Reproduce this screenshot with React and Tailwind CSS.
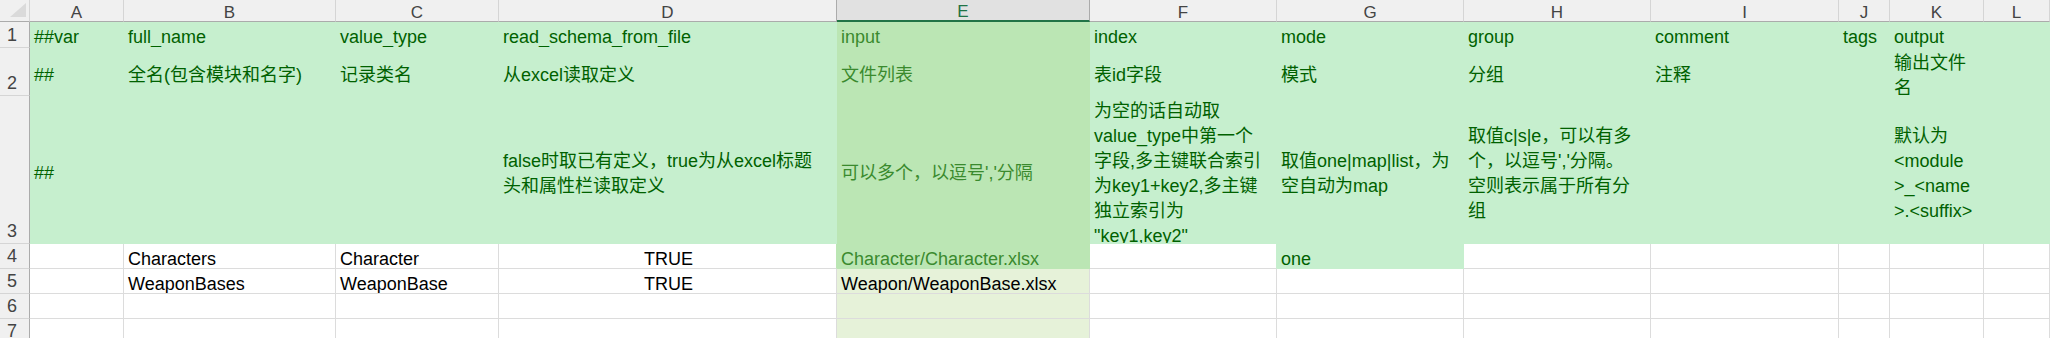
import React from "react";

const COLS = ["A", "B", "C", "D", "E", "F", "G", "H", "I", "J", "K", "L"];

// cell types: g = green fill, eg = green fill in selected column, el = light selection, w = white
const BG = {
  g: "bg-[#C6EFCE]",
  eg: "bg-[#BBE6B4]",
  el: "bg-[#E6F2D9]",
  w: "bg-white",
};
const BR = {
  g: "border-r-[#C6EFCE]",
  eg: "border-r-[#BBE6B4]",
  grid: "border-r-[#DCDCDC]",
};
const BB = {
  g: "border-b-[#C6EFCE]",
  eg: "border-b-[#BBE6B4]",
  grid: "border-b-[#DCDCDC]",
};

function typeOf(r, c) {
  if (r <= 3) return c === 4 ? "eg" : "g";
  if (r === 4) {
    if (c === 4) return "eg";
    if (c === 6) return "g";
    return "w";
  }
  return c === 4 ? "el" : "w";
}

const isGreen = (t) => t === "g" || t === "eg";

const DATA = {
  1: ["##var", "full_name", "value_type", "read_schema_from_file", "input", "index", "mode", "group", "comment", "tags", "output", ""],
  2: ["##", "全名(包含模块和名字)", "记录类名", "从excel读取定义", "文件列表", "表id字段", "模式", "分组", "注释", "", ["输出文件", "名"], ""],
  3: [
    "##",
    "",
    "",
    ["false时取已有定义，true为从excel标题", "头和属性栏读取定义"],
    "可以多个，以逗号','分隔",
    ["为空的话自动取", "value_type中第一个", "字段,多主键联合索引", "为key1+key2,多主键", "独立索引为", "\"key1,key2\""],
    ["取值one|map|list，为", "空自动为map"],
    ["取值c|s|e，可以有多", "个，以逗号','分隔。", "空则表示属于所有分", "组"],
    "",
    "",
    ["默认为", "<module", ">_<name", ">.<suffix>"],
    "",
  ],
  4: ["", "Characters", "Character", "TRUE", "Character/Character.xlsx", "", "one", "", "", "", "", ""],
  5: ["", "WeaponBases", "WeaponBase", "TRUE", "Weapon/WeaponBase.xlsx", "", "", "", "", "", "", ""],
  6: Array(12).fill(""),
  7: Array(12).fill(""),
};

function Corner() {
  return (
    <div className="bg-[#F0F0F0] border-r border-b border-r-[#D5D5D5] border-b-[#ABABAB] relative">
      <svg width="29" height="21" className="absolute left-0 top-0">
        <polygon points="10,17 26,17 26,3" fill="#DADADA" />
      </svg>
    </div>
  );
}

function ColHeader({ k }) {
  if (k === "E") {
    return (
      <div className="bg-[#E1E1E1] border-r border-r-[#ABABAB] border-b-2 border-b-[#217346] flex items-center justify-center text-[#217346] text-[17px] leading-[19px] pt-[2px]">
        {k}
      </div>
    );
  }
  const rightBorder = k === "D" ? "border-r-[#ABABAB]" : "border-r-[#D5D5D5]";
  return (
    <div className={`bg-[#F0F0F0] border-r border-b ${rightBorder} border-b-[#ABABAB] flex items-center justify-center text-[#444444] text-[17px] leading-[21px] pt-[3px]`}>
      {k}
    </div>
  );
}

function RowHeader({ n }) {
  return (
    <div className="bg-[#F0F0F0] border-r border-b border-r-[#ABABAB] border-b-[#D5D5D5] flex items-end justify-center pr-[5px] pb-[1px] text-[#444444] text-[18px] leading-[22px]">
      {n}
    </div>
  );
}

function Cell({ r, c }) {
  const t = typeOf(r, c);
  const right = c < 11 ? typeOf(r, c + 1) : "w";
  const below = r < 7 ? typeOf(r + 1, c) : "w";
  const brKey = isGreen(t) ? t : isGreen(right) ? right : "grid";
  const bbKey = isGreen(t) ? t : isGreen(below) ? below : "grid";
  const v = DATA[r][c];
  const lines = Array.isArray(v) ? v : v ? [v] : [];
  let color = "text-black";
  if (isGreen(t)) color = c === 4 ? "text-[#3A8A2E]" : "text-[#006100]";
  const center = r >= 4 && c === 3;
  const pad = r === 1 ? "pt-[5px]" : r >= 4 ? "pt-[6px]" : "pt-[8px]";
  return (
    <div
      className={`${BG[t]} border-r border-b ${BR[brKey]} ${BB[bbKey]} ${color} overflow-hidden flex flex-col justify-center ${center ? "items-center" : "items-start"} pl-[4px] pr-[2px] ${pad} text-[18px] leading-[25px]`}
    >
      {lines.map((l, i) => (
        <div key={i} className="whitespace-pre shrink-0">
          {l}
        </div>
      ))}
    </div>
  );
}

export default function App() {
  const rows = [1, 2, 3, 4, 5, 6, 7];
  return (
    <div className="w-[2050px] h-[338px] overflow-hidden bg-white font-['Liberation_Sans','Noto_Sans_CJK_SC',sans-serif]">
      <div className="grid grid-cols-[30px_94px_212px_163px_338px_253px_187px_187px_187px_188px_51px_94px_1fr] grid-rows-[22px_26px_48px_148px_25px_25px_25px_25px]">
        <Corner />
        {COLS.map((k) => (
          <ColHeader key={k} k={k} />
        ))}
        {rows.map((r) => (
          <React.Fragment key={r}>
            <RowHeader n={r} />
            {COLS.map((k, c) => (
              <Cell key={k} r={r} c={c} />
            ))}
          </React.Fragment>
        ))}
      </div>
    </div>
  );
}
